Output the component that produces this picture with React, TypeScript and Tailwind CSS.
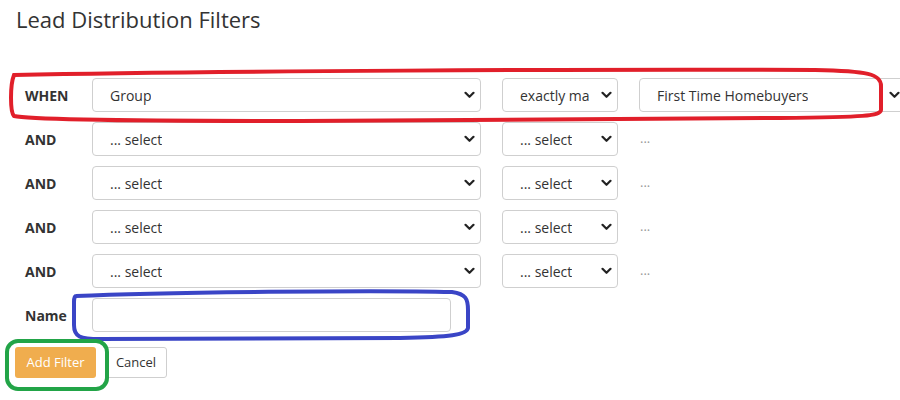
import React from "react";

const Chevron = () => (
  <svg width="11" height="8" viewBox="0 0 11 8" className="shrink-0">
    <path d="M1.5 1.8 L5.5 5.8 L9.5 1.8" fill="none" stroke="#222" strokeWidth="2.2" strokeLinecap="round" strokeLinejoin="round" />
  </svg>
);

type SelectProps = { label: string; className: string };

const FakeSelect: React.FC<SelectProps> = ({ label, className }) => (
  <div className={`h-[34px] flex items-center justify-between pl-[17px] pr-[5px] border border-[#cfcfcf] rounded-[4px] bg-white ${className}`}>
    <span className="overflow-hidden whitespace-nowrap text-[14px] text-[#333]">{label}</span>
    <Chevron />
  </div>
);

const Row: React.FC<{ label: string; first: string; second: string; third?: string }> = ({ label, first, second, third }) => (
  <div className="flex items-center h-[34px]">
    <div className="w-[76px] shrink-0 pl-[9px] text-[14px] font-bold text-[#333]">{label}</div>
    <FakeSelect label={first} className="w-[389px] shrink-0" />
    <FakeSelect label={second} className="w-[116px] ml-[21px] shrink-0" />
    {third ? (
      <FakeSelect label={third} className="w-[267px] ml-[21px] shrink-0" />
    ) : (
      <span className="ml-[22px] text-[13px] text-[#999]">...</span>
    )}
  </div>
);

export default function App() {
  return (
    <div
      className="relative w-[900px] h-[400px] overflow-hidden bg-white"
      style={{ fontFamily: '"Open Sans", "Liberation Sans", sans-serif' }}
    >
      <div className="pl-[16px] pt-[5px]">
        <h2 className="text-[22px] leading-[28px] font-medium text-[#333]">Lead Distribution Filters</h2>
      </div>

      <div className="mt-[45px] pl-[16px] flex flex-col gap-[10px]">
        <Row label="WHEN" first="Group" second="exactly ma" third="First Time Homebuyers" />
        <Row label="AND" first="... select" second="... select" />
        <Row label="AND" first="... select" second="... select" />
        <Row label="AND" first="... select" second="... select" />
        <Row label="AND" first="... select" second="... select" />
        <div className="flex items-center h-[34px]">
          <div className="w-[76px] shrink-0 pl-[9px] text-[14px] font-bold text-[#333]">Name</div>
          <div className="w-[359px] h-[34px] border border-[#cfcfcf] rounded-[4px] bg-white" />
        </div>
      </div>

      <div className="mt-[15px] pl-[15px] flex gap-[9px]">
        <button className="w-[81px] h-[31px] rounded-[3px] bg-[#f0ad4e] text-white text-[13px]">Add Filter</button>
        <button className="w-[62px] h-[31px] rounded-[3px] border border-[#cfcfcf] bg-white text-[#333] text-[13px]">Cancel</button>
      </div>

      <svg className="absolute inset-0 pointer-events-none" width="900" height="400" viewBox="0 0 900 400">
        <path
          d="M14 75 C 200 71 600 69 815 70 C 868 71 881 74 881 86 L 881 110 C 880 116 866 117 780 118 L 300 121 C 150 121 30 120 14 116 C 10 112 10 85 14 75 Z"
          fill="none"
          stroke="#e11f2a"
          strokeWidth="4"
        />
        <path
          d="M76 296 C 160 292 380 290 452 292 C 466 294 468 299 468 310 L 468 328 C 467 335 450 337 400 338 L 100 339 C 80 339 74 337 74 325 L 74 302 C 74 298 75 296 76 296 Z"
          fill="none"
          stroke="#3a45c6"
          strokeWidth="4"
        />
        <rect x="7" y="341" width="100" height="48" rx="11" fill="none" stroke="#22a447" strokeWidth="4" />
      </svg>
    </div>
  );
}
